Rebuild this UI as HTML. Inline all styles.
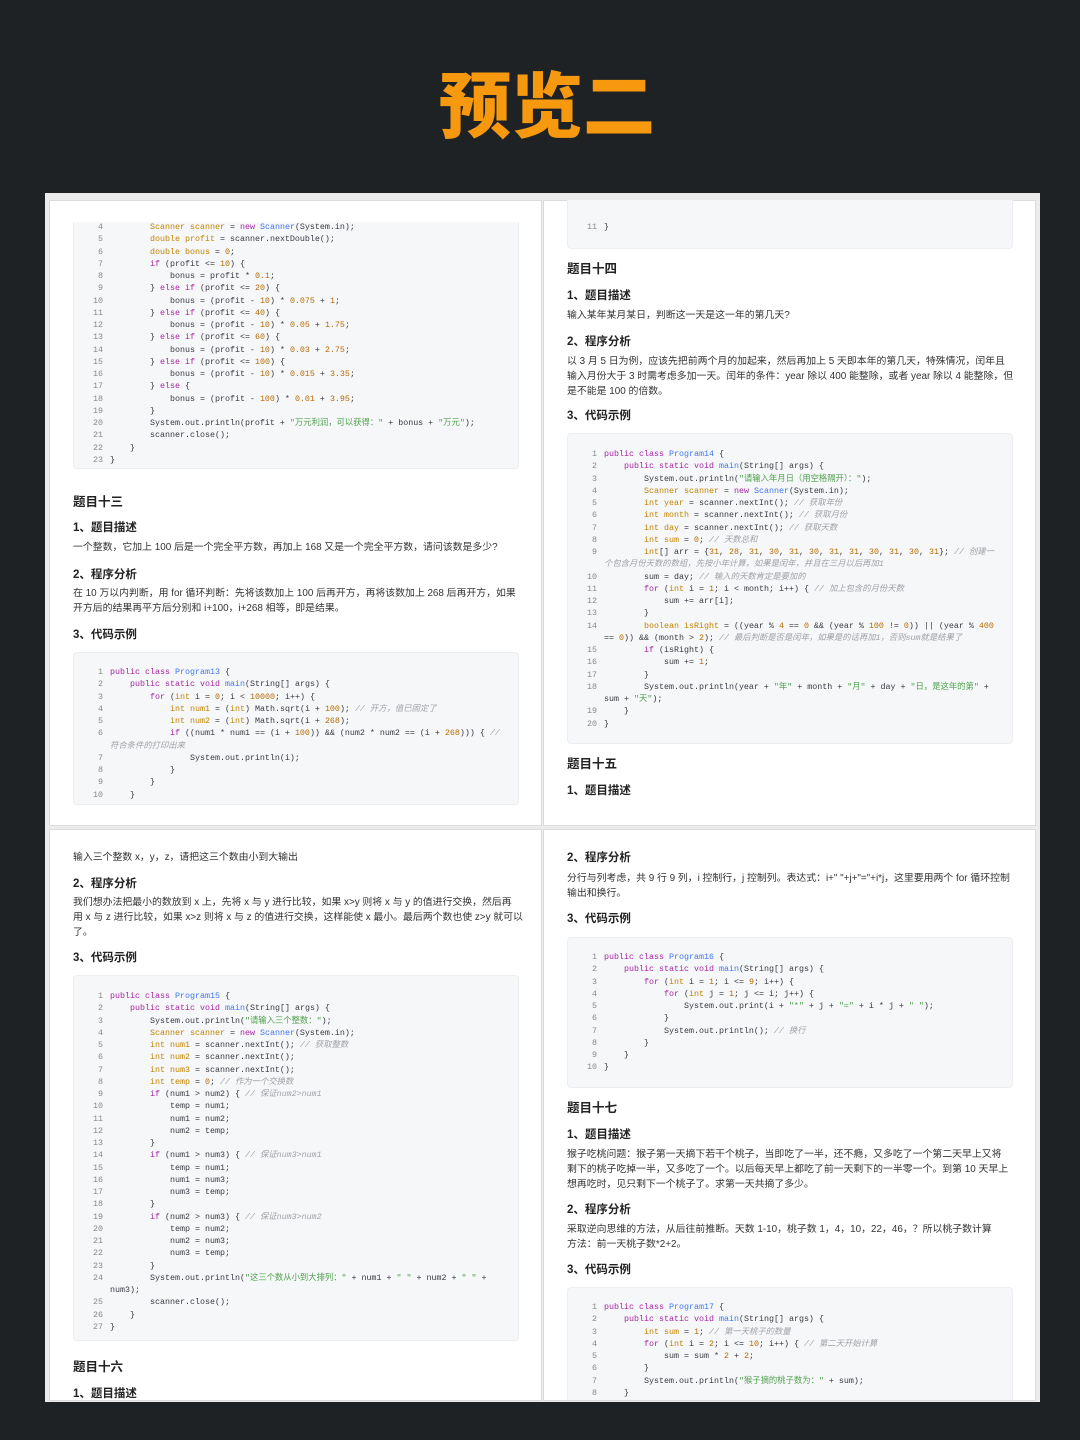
<!DOCTYPE html>
<html><head><meta charset="utf-8">
<style>
*{margin:0;padding:0;box-sizing:border-box}
body{width:1080px;height:1440px;background:#1f2224;position:relative;overflow:hidden;font-family:"Liberation Sans","Noto Sans CJK SC",sans-serif;color:#333}
.title{position:absolute;left:7px;width:1080px;top:53px;text-align:center;font-family:"Noto Sans CJK SC",sans-serif;font-weight:900;font-size:72px;line-height:96px;color:#f7990f}
.wrap{position:absolute;left:45px;top:193px;width:995px;height:1209px;background:#ececec}
.p{position:absolute;background:#fff;border:1px solid #dcdcdc;overflow:hidden}
.a{position:absolute;white-space:nowrap}
.h1{font-size:12.5px;font-weight:bold;line-height:16px;color:#222}
.h2{font-size:11.5px;font-weight:bold;line-height:16px;color:#222}
.t{font-size:9.9px;line-height:14.8px;color:#333}
.cb{position:absolute;background:#f6f7f9;border:1px solid #eceef1;border-radius:4px}
pre{position:absolute;font-family:"Liberation Mono","Noto Sans CJK SC",monospace;font-size:8.33px;line-height:12.25px;color:#383a42;white-space:pre}
pre i{display:inline-block;width:30px;text-align:right;margin-right:7px;font-style:normal;color:#888}
.k{color:#a626a4}.y{color:#c18401}.b{color:#4078f2}.n{color:#b76b01}.s{color:#50a14f}.c{color:#a0a1a7;font-style:italic}
</style></head><body>
<div class="title">预览二</div>
<div class="wrap"></div>
<div class="p" style="left:49px;top:200px;width:493px;height:626px"></div>
<div class="p" style="left:543px;top:200px;width:493px;height:626px"></div>
<div class="p" style="left:49px;top:829px;width:493px;height:572px"></div>
<div class="p" style="left:543px;top:829px;width:493px;height:572px"></div>

<!-- TL -->
<div class="cb" style="left:73px;top:222px;width:446px;height:247px;border-top:none;border-radius:0 0 4px 4px"></div>
<pre style="left:73px;top:221px"><i>4</i>        <span class="y">Scanner scanner</span> = <span class="k">new</span> <span class="b">Scanner</span>(System.in);
<i>5</i>        <span class="y">double profit</span> = scanner.nextDouble();
<i>6</i>        <span class="y">double bonus</span> = <span class="n">0</span>;
<i>7</i>        <span class="k">if</span> (profit &lt;= <span class="n">10</span>) {
<i>8</i>            bonus = profit * <span class="n">0.1</span>;
<i>9</i>        } <span class="k">else if</span> (profit &lt;= <span class="n">20</span>) {
<i>10</i>            bonus = (profit - <span class="n">10</span>) * <span class="n">0.075</span> + <span class="n">1</span>;
<i>11</i>        } <span class="k">else if</span> (profit &lt;= <span class="n">40</span>) {
<i>12</i>            bonus = (profit - <span class="n">10</span>) * <span class="n">0.05</span> + <span class="n">1.75</span>;
<i>13</i>        } <span class="k">else if</span> (profit &lt;= <span class="n">60</span>) {
<i>14</i>            bonus = (profit - <span class="n">10</span>) * <span class="n">0.03</span> + <span class="n">2.75</span>;
<i>15</i>        } <span class="k">else if</span> (profit &lt;= <span class="n">100</span>) {
<i>16</i>            bonus = (profit - <span class="n">10</span>) * <span class="n">0.015</span> + <span class="n">3.35</span>;
<i>17</i>        } <span class="k">else</span> {
<i>18</i>            bonus = (profit - <span class="n">100</span>) * <span class="n">0.01</span> + <span class="n">3.95</span>;
<i>19</i>        }
<i>20</i>        System.out.println(profit + <span class="s">"万元利润，可以获得："</span> + bonus + <span class="s">"万元"</span>);
<i>21</i>        scanner.close();
<i>22</i>    }
<i>23</i>}</pre>
<div class="a h1" style="left:73px;top:494px">题目十三</div>
<div class="a h2" style="left:73px;top:520px">1、题目描述</div>
<div class="a t" style="left:73px;top:541px">一个整数，它加上 100 后是一个完全平方数，再加上 168 又是一个完全平方数，请问该数是多少?</div>
<div class="a h2" style="left:73px;top:567px">2、程序分析</div>
<div class="a t" style="left:73px;top:587px">在 10 万以内判断，用 for 循环判断：先将该数加上 100 后再开方，再将该数加上 268 后再开方，如果<br>开方后的结果再平方后分别和 i+100，i+268 相等，即是结果。</div>
<div class="a h2" style="left:73px;top:627px">3、代码示例</div>
<div class="cb" style="left:73px;top:652px;width:446px;height:153px"></div>
<pre style="left:73px;top:666px"><i>1</i><span class="k">public class</span> <span class="b">Program13</span> {
<i>2</i>    <span class="k">public static void</span> <span class="b">main</span>(String[] args) {
<i>3</i>        <span class="k">for</span> (<span class="y">int</span> i = <span class="n">0</span>; i &lt; <span class="n">10000</span>; i++) {
<i>4</i>            <span class="y">int num1</span> = (<span class="y">int</span>) Math.sqrt(i + <span class="n">100</span>); <span class="c">// 开方，值已固定了</span>
<i>5</i>            <span class="y">int num2</span> = (<span class="y">int</span>) Math.sqrt(i + <span class="n">268</span>);
<i>6</i>            <span class="k">if</span> ((num1 * num1 == (i + <span class="n">100</span>)) &amp;&amp; (num2 * num2 == (i + <span class="n">268</span>))) { <span class="c">//</span>
<i></i><span class="c">符合条件的打印出来</span>
<i>7</i>                System.out.println(i);
<i>8</i>            }
<i>9</i>        }
<i>10</i>    }</pre>

<!-- TR -->
<div class="cb" style="left:567px;top:200px;width:446px;height:49px;border-top:none;border-radius:0 0 4px 4px"></div>
<pre style="left:567px;top:221px"><i>11</i>}</pre>
<div class="a h1" style="left:567px;top:261px">题目十四</div>
<div class="a h2" style="left:567px;top:288px">1、题目描述</div>
<div class="a t" style="left:567px;top:309px">输入某年某月某日，判断这一天是这一年的第几天?</div>
<div class="a h2" style="left:567px;top:334px">2、程序分析</div>
<div class="a t" style="left:567px;top:355px">以 3 月 5 日为例，应该先把前两个月的加起来，然后再加上 5 天即本年的第几天，特殊情况，闰年且<br>输入月份大于 3 时需考虑多加一天。闰年的条件：year 除以 400 能整除，或者 year 除以 4 能整除，但<br>是不能是 100 的倍数。</div>
<div class="a h2" style="left:567px;top:408px">3、代码示例</div>
<div class="cb" style="left:567px;top:433px;width:446px;height:311px"></div>
<pre style="left:567px;top:448px"><i>1</i><span class="k">public class</span> <span class="b">Program14</span> {
<i>2</i>    <span class="k">public static void</span> <span class="b">main</span>(String[] args) {
<i>3</i>        System.out.println(<span class="s">"请输入年月日（用空格隔开）："</span>);
<i>4</i>        <span class="y">Scanner scanner</span> = <span class="k">new</span> <span class="b">Scanner</span>(System.in);
<i>5</i>        <span class="y">int year</span> = scanner.nextInt(); <span class="c">// 获取年份</span>
<i>6</i>        <span class="y">int month</span> = scanner.nextInt(); <span class="c">// 获取月份</span>
<i>7</i>        <span class="y">int day</span> = scanner.nextInt(); <span class="c">// 获取天数</span>
<i>8</i>        <span class="y">int sum</span> = <span class="n">0</span>; <span class="c">// 天数总和</span>
<i>9</i>        <span class="y">int</span>[] arr = {<span class="n">31</span>, <span class="n">28</span>, <span class="n">31</span>, <span class="n">30</span>, <span class="n">31</span>, <span class="n">30</span>, <span class="n">31</span>, <span class="n">31</span>, <span class="n">30</span>, <span class="n">31</span>, <span class="n">30</span>, <span class="n">31</span>}; <span class="c">// 创建一</span>
<i></i><span class="c">个包含月份天数的数组，先按小年计算，如果是闰年，并且在三月以后再加1</span>
<i>10</i>        sum = day; <span class="c">// 输入的天数肯定是要加的</span>
<i>11</i>        <span class="k">for</span> (<span class="y">int</span> i = <span class="n">1</span>; i &lt; month; i++) { <span class="c">// 加上包含的月份天数</span>
<i>12</i>            sum += arr[i];
<i>13</i>        }
<i>14</i>        <span class="y">boolean isRight</span> = ((year % <span class="n">4</span> == <span class="n">0</span> &amp;&amp; (year % <span class="n">100</span> != <span class="n">0</span>)) || (year % <span class="n">400</span>
<i></i>== <span class="n">0</span>)) &amp;&amp; (month &gt; <span class="n">2</span>); <span class="c">// 最后判断是否是闰年，如果是的话再加1，否则sum就是结果了</span>
<i>15</i>        <span class="k">if</span> (isRight) {
<i>16</i>            sum += <span class="n">1</span>;
<i>17</i>        }
<i>18</i>        System.out.println(year + <span class="s">"年"</span> + month + <span class="s">"月"</span> + day + <span class="s">"日，是这年的第"</span> +
<i></i>sum + <span class="s">"天"</span>);
<i>19</i>    }
<i>20</i>}</pre>
<div class="a h1" style="left:567px;top:756px">题目十五</div>
<div class="a h2" style="left:567px;top:783px">1、题目描述</div>

<!-- BL -->
<div class="a t" style="left:73px;top:851px">输入三个整数 x，y，z，请把这三个数由小到大输出</div>
<div class="a h2" style="left:73px;top:876px">2、程序分析</div>
<div class="a t" style="left:73px;top:896px">我们想办法把最小的数放到 x 上，先将 x 与 y 进行比较，如果 x&gt;y 则将 x 与 y 的值进行交换，然后再<br>用 x 与 z 进行比较，如果 x&gt;z 则将 x 与 z 的值进行交换，这样能使 x 最小。最后两个数也使 z&gt;y 就可以<br>了。</div>
<div class="a h2" style="left:73px;top:950px">3、代码示例</div>
<div class="cb" style="left:73px;top:975px;width:446px;height:366px"></div>
<pre style="left:73px;top:990px"><i>1</i><span class="k">public class</span> <span class="b">Program15</span> {
<i>2</i>    <span class="k">public static void</span> <span class="b">main</span>(String[] args) {
<i>3</i>        System.out.println(<span class="s">"请输入三个整数："</span>);
<i>4</i>        <span class="y">Scanner scanner</span> = <span class="k">new</span> <span class="b">Scanner</span>(System.in);
<i>5</i>        <span class="y">int num1</span> = scanner.nextInt(); <span class="c">// 获取整数</span>
<i>6</i>        <span class="y">int num2</span> = scanner.nextInt();
<i>7</i>        <span class="y">int num3</span> = scanner.nextInt();
<i>8</i>        <span class="y">int temp</span> = <span class="n">0</span>; <span class="c">// 作为一个交换数</span>
<i>9</i>        <span class="k">if</span> (num1 &gt; num2) { <span class="c">// 保证num2&gt;num1</span>
<i>10</i>            temp = num1;
<i>11</i>            num1 = num2;
<i>12</i>            num2 = temp;
<i>13</i>        }
<i>14</i>        <span class="k">if</span> (num1 &gt; num3) { <span class="c">// 保证num3&gt;num1</span>
<i>15</i>            temp = num1;
<i>16</i>            num1 = num3;
<i>17</i>            num3 = temp;
<i>18</i>        }
<i>19</i>        <span class="k">if</span> (num2 &gt; num3) { <span class="c">// 保证num3&gt;num2</span>
<i>20</i>            temp = num2;
<i>21</i>            num2 = num3;
<i>22</i>            num3 = temp;
<i>23</i>        }
<i>24</i>        System.out.println(<span class="s">"这三个数从小到大排列："</span> + num1 + <span class="s">" "</span> + num2 + <span class="s">" "</span> +
<i></i>num3);
<i>25</i>        scanner.close();
<i>26</i>    }
<i>27</i>}</pre>
<div class="a h1" style="left:73px;top:1359px">题目十六</div>
<div class="a h2" style="left:73px;top:1386px">1、题目描述</div>

<!-- BR -->
<div class="a h2" style="left:567px;top:850px">2、程序分析</div>
<div class="a t" style="left:567px;top:872px">分行与列考虑，共 9 行 9 列，i 控制行，j 控制列。表达式：i+" "+j+"="+i*j，这里要用两个 for 循环控制<br>输出和换行。</div>
<div class="a h2" style="left:567px;top:911px">3、代码示例</div>
<div class="cb" style="left:567px;top:937px;width:446px;height:151px"></div>
<pre style="left:567px;top:951px"><i>1</i><span class="k">public class</span> <span class="b">Program16</span> {
<i>2</i>    <span class="k">public static void</span> <span class="b">main</span>(String[] args) {
<i>3</i>        <span class="k">for</span> (<span class="y">int</span> i = <span class="n">1</span>; i &lt;= <span class="n">9</span>; i++) {
<i>4</i>            <span class="k">for</span> (<span class="y">int</span> j = <span class="n">1</span>; j &lt;= i; j++) {
<i>5</i>                System.out.print(i + <span class="s">"*"</span> + j + <span class="s">"="</span> + i * j + <span class="s">" "</span>);
<i>6</i>            }
<i>7</i>            System.out.println(); <span class="c">// 换行</span>
<i>8</i>        }
<i>9</i>    }
<i>10</i>}</pre>
<div class="a h1" style="left:567px;top:1100px">题目十七</div>
<div class="a h2" style="left:567px;top:1127px">1、题目描述</div>
<div class="a t" style="left:567px;top:1148px">猴子吃桃问题：猴子第一天摘下若干个桃子，当即吃了一半，还不瘾，又多吃了一个第二天早上又将<br>剩下的桃子吃掉一半，又多吃了一个。以后每天早上都吃了前一天剩下的一半零一个。到第 10 天早上<br>想再吃时，见只剩下一个桃子了。求第一天共摘了多少。</div>
<div class="a h2" style="left:567px;top:1202px">2、程序分析</div>
<div class="a t" style="left:567px;top:1223px">采取逆向思维的方法，从后往前推断。天数 1-10，桃子数 1，4，10，22，46，？所以桃子数计算<br>方法：前一天桃子数*2+2。</div>
<div class="a h2" style="left:567px;top:1262px">3、代码示例</div>
<div class="cb" style="left:567px;top:1287px;width:446px;height:113px;border-bottom:none;border-radius:4px 4px 0 0"></div>
<pre style="left:567px;top:1301px"><i>1</i><span class="k">public class</span> <span class="b">Program17</span> {
<i>2</i>    <span class="k">public static void</span> <span class="b">main</span>(String[] args) {
<i>3</i>        <span class="y">int sum</span> = <span class="n">1</span>; <span class="c">// 第一天桃子的数量</span>
<i>4</i>        <span class="k">for</span> (<span class="y">int</span> i = <span class="n">2</span>; i &lt;= <span class="n">10</span>; i++) { <span class="c">// 第二天开始计算</span>
<i>5</i>            sum = sum * <span class="n">2</span> + <span class="n">2</span>;
<i>6</i>        }
<i>7</i>        System.out.println(<span class="s">"猴子摘的桃子数为："</span> + sum);
<i>8</i>    }</pre>
</body></html>
